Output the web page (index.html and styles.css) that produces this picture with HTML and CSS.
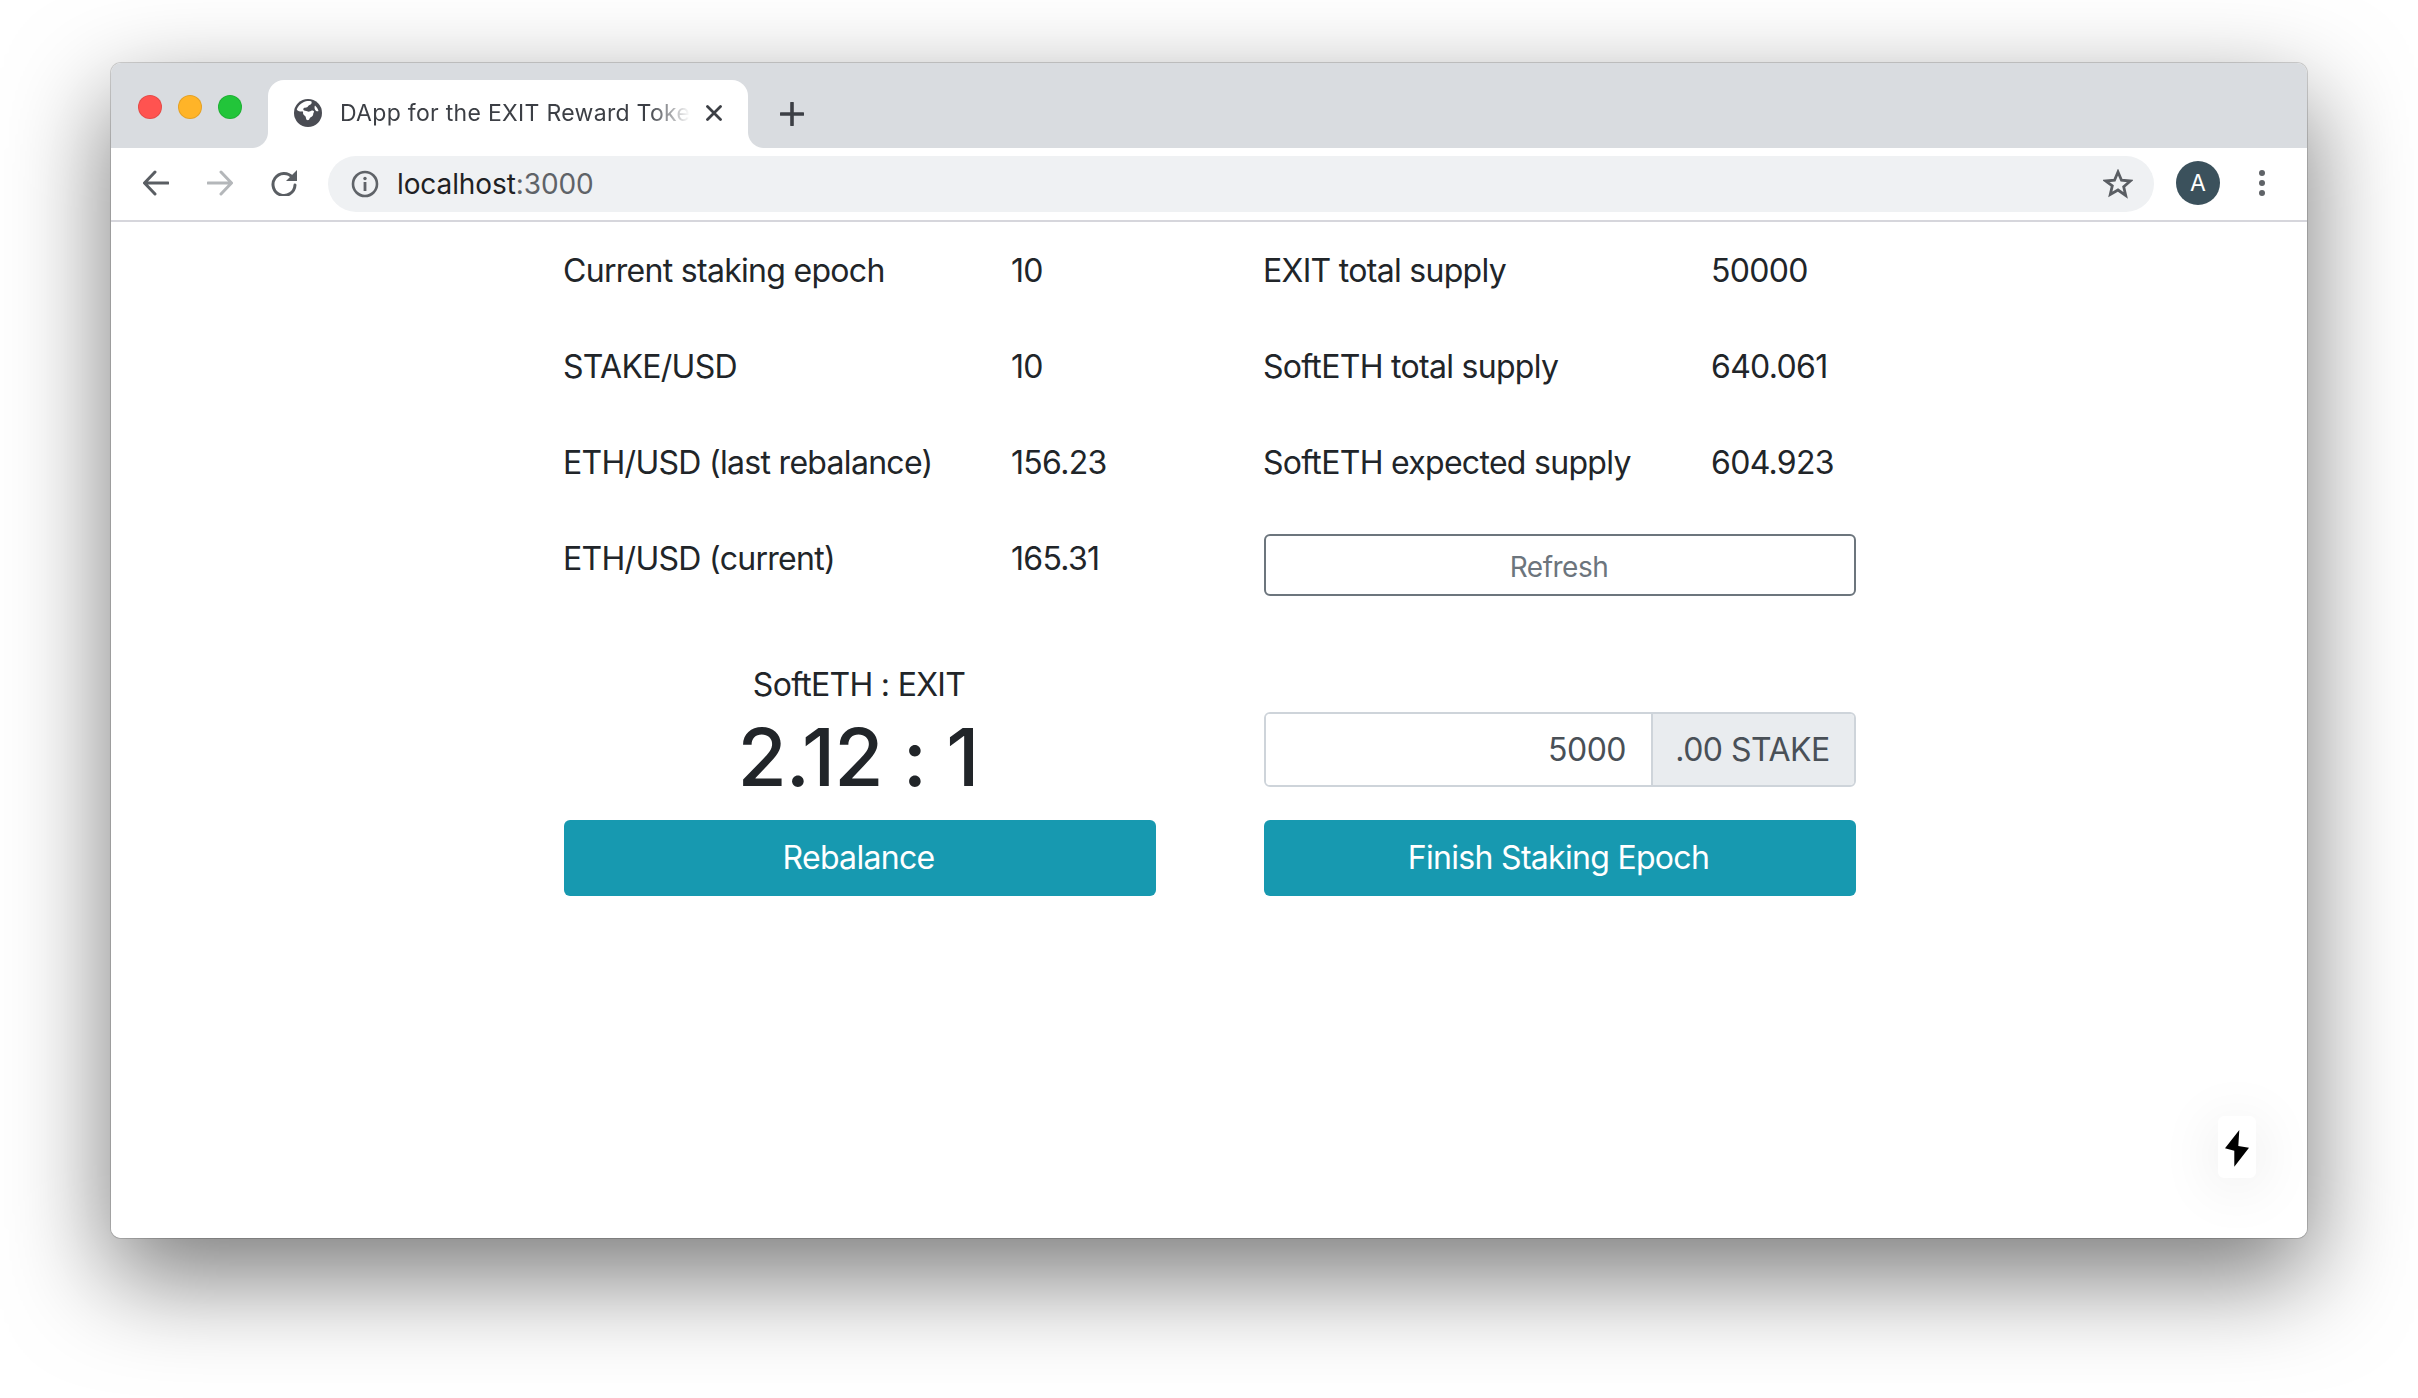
FILE: index.html
```html
<!DOCTYPE html>
<html lang="en">
<head>
<meta charset="utf-8">
<title>DApp for the EXIT Reward Token</title>
<link rel="stylesheet" href="styles.css">
</head>
<body>
<div class="window">
  <header class="tabbar">
    <div class="lights">
      <span class="light red"></span>
      <span class="light yellow"></span>
      <span class="light green"></span>
    </div>
    <div class="tab">
      <svg class="favicon" viewBox="0 0 28 28" width="28" height="28"><circle cx="14" cy="14" r="14" fill="#4a4c53"/><path d="M9 3.500c3-1.500 6-1.700 8.500-1 .6 1.600-.3 3-2 3.600-1.200.5-1.400 1.600-2.400 2.200-1.400.8-2.800 0-3.600 1.200-.7 1 .2 2.200 1.600 2.200 1.800 0 2.700 1.300 4.300.9 1.500-.4 2.300-1.400 3.800-.9.900.3 1.100 1 .5 1.900-.8 1.100-.1 2.300-1.200 3.300-1.100 1-2.500 1.300-2.900 2.600-.3 1.100-1.300 2-2.600 1.500-1.100-.5-.8-1.900-1.300-3.100-.5-1.200-2.100-1.500-2.500-2.800-.4-1.200.4-2-.8-2.900C5.200 13 3.400 12 2.800 10.300 3.900 7.300 6.200 5 9 3.500z" fill="#fff"/><path d="M21 6.500c1.600 1.400 3 3.400 3.500 5.500-1.200.5-2.600 0-3.300-1.100-.7-1.200-1-3-.2-4.400z" fill="#fff"/></svg>
      <span class="tab-title">DApp for the EXIT Reward Token</span>
      <svg class="tab-close" viewBox="0 0 16 16" width="16" height="16"><path d="M1.500 1.500l13 13M14.500 1.500l-13 13" stroke="#3c3f45" stroke-width="2.800" stroke-linecap="round"/></svg>
    </div>
    <svg class="new-tab" viewBox="0 0 24 24" width="24" height="24"><path d="M12 1v22M1 12h22" stroke="#3c3f45" stroke-width="3.600" stroke-linecap="round"/></svg>
  </header>
  <nav class="toolbar">
    <svg class="nav-icon" viewBox="0 0 26 26" width="26" height="26"><path d="M25 13H2M12 2L1.500 13 12 24" fill="none" stroke="#5a5e63" stroke-width="3" stroke-linecap="round" stroke-linejoin="round"/></svg>
    <svg class="nav-icon" viewBox="0 0 26 26" width="26" height="26"><path d="M1 13h23M14 2l10.500 11L14 24" fill="none" stroke="#b4b7ba" stroke-width="3" stroke-linecap="round" stroke-linejoin="round"/></svg>
    <svg class="nav-icon" viewBox="0 0 26 26" width="26" height="26"><path d="M21.500 7.500A11 11 0 1 0 24 15" fill="none" stroke="#5a5e63" stroke-width="3" stroke-linecap="round"/><path d="M26 0v11H15z" fill="#5a5e63"/></svg>
    <div class="omnibox">
      <svg class="info" viewBox="0 0 28 28" width="28" height="28"><circle cx="14" cy="14" r="12" fill="none" stroke="#5f6368" stroke-width="2.600"/><circle cx="14" cy="8.500" r="1.700" fill="#5f6368"/><rect x="12.600" y="12" width="2.800" height="9" fill="#5f6368"/></svg>
      <span class="url">localhost<span class="port">:3000</span></span>
      <svg class="star" viewBox="0 0 30 30" width="30" height="30"><path d="M15 3l3.500 8.200 8.900.8-6.700 5.800 2 8.700L15 21l-7.700 4.500 2-8.700L2.600 12l8.900-.8z" fill="none" stroke="#5a5e63" stroke-width="2.800" stroke-linejoin="miter"/></svg>
    </div>
    <div class="avatar">A</div>
    <div class="kebab"><span></span><span></span><span></span></div>
  </nav>
  <main class="page">
    <div class="content">
      <section class="stats">
        <div class="stat"><span class="stat-label">Current staking epoch</span><span>10</span></div>
        <div class="stat"><span class="stat-label">STAKE/USD</span><span>10</span></div>
        <div class="stat"><span class="stat-label">ETH/USD (last rebalance)</span><span>156.23</span></div>
        <div class="stat"><span class="stat-label">ETH/USD (current)</span><span>165.31</span></div>
      </section>
      <section class="stats">
        <div class="stat"><span class="stat-label">EXIT total supply</span><span>50000</span></div>
        <div class="stat"><span class="stat-label">SoftETH total supply</span><span>640.061</span></div>
        <div class="stat"><span class="stat-label">SoftETH expected supply</span><span>604.923</span></div>
        <div class="stat"><button class="btn-outline">Refresh</button></div>
      </section>
      <section class="action ratio">
        <div class="ratio-label">SoftETH : EXIT</div>
        <div class="ratio-value">2.12 : 1</div>
        <button class="btn-primary">Rebalance</button>
      </section>
      <section class="action">
        <div class="input-group">
          <input class="amount" type="text" value="5000">
          <span class="addon">.00 STAKE</span>
        </div>
        <button class="btn-primary">Finish Staking Epoch</button>
      </section>
    </div>
    <div class="bolt-widget">
      <svg viewBox="0 0 38 62" width="38" height="62"><path d="M21.300 14L7 32.300l9.300 2.400v16L31 31.700 20.300 30z" fill="#000"/></svg>
    </div>
  </main>
</div>
</body>
</html>
```

FILE: styles.css
```css
* { box-sizing: border-box; }

html, body { margin: 0; height: 100%; }

body {
  background: #fff;
  padding: 63px 111px 0 111px;
  font-family: "Inter", "Liberation Sans", sans-serif;
  color: #212529;
  overflow: hidden;
}

.window {
  width: 2196px;
  height: 1175px;
  border-radius: 10px;
  display: flex;
  flex-direction: column;
  background: #fff;
  box-shadow: 0 0 0 1px rgba(0, 0, 0, .16), 0 38px 100px 2px rgba(0, 0, 0, .52);
}

.tabbar {
  height: 85px;
  flex: none;
  background: #d9dce0;
  border-radius: 10px 10px 0 0;
  display: flex;
  align-items: flex-end;
  padding-left: 27px;
}

.lights {
  display: flex;
  gap: 16px;
  align-self: flex-start;
  margin-top: 32px;
  width: 130px;
}

.light {
  width: 24px;
  height: 24px;
  border-radius: 50%;
  border: 1px solid rgba(0, 0, 0, .1);
}
.red { background: #ff5350; }
.yellow { background: #ffb428; }
.green { background: #22c53a; }

.tab {
  position: relative;
  width: 480px;
  height: 68px;
  background: #fff;
  border-radius: 16px 16px 0 0;
  display: flex;
  align-items: center;
  padding: 0 0 2px 26px;
}

.tab::before,
.tab::after {
  content: "";
  position: absolute;
  bottom: 0;
  width: 16px;
  height: 16px;
}
.tab::before {
  left: -16px;
  background: radial-gradient(circle at 0 0, #d9dce0 15.500px, #fff 16.500px);
}
.tab::after {
  right: -16px;
  background: radial-gradient(circle at 100% 0, #d9dce0 15.500px, #fff 16.500px);
}

.favicon { flex: none; }

.tab-title {
  width: 350px;
  margin-left: 18px;
  font-size: 23px;
  white-space: nowrap;
  overflow: hidden;
  color: #3c3f45;
  letter-spacing: .3px;
  -webkit-mask-image: linear-gradient(to right, #000 88%, transparent 100%);
  mask-image: linear-gradient(to right, #000 88%, transparent 100%);
}

.tab-close { flex: none; margin-left: 16px; }

.new-tab { flex: none; margin: 0 0 22px 32px; }

.toolbar {
  height: 74px;
  flex: none;
  display: flex;
  align-items: center;
  padding: 0 42px 2px 32px;
  border-bottom: 2px solid #d6d6dc;
}

.nav-icon { flex: none; margin-right: 38px; }
.nav-icon:nth-of-type(3) { margin-right: 31px; margin-left: 0; }

.omnibox {
  flex: 1;
  height: 56px;
  border-radius: 28px;
  background: #eff1f3;
  display: flex;
  align-items: center;
  padding: 0 21px 0 23px;
  margin-top: 2px;
}

.info { flex: none; }

.url {
  margin-left: 18px;
  font-size: 28px;
  color: #1f2124;
  letter-spacing: -.1px;
  flex: 1;
}
.port { color: #5f6368; }

.star { flex: none; }

.avatar {
  flex: none;
  width: 44px;
  height: 44px;
  margin-left: 22px;
  border-radius: 50%;
  background: #3b515c;
  color: #fff;
  font-size: 23px;
  display: flex;
  align-items: center;
  justify-content: center;
}

.kebab {
  flex: none;
  margin-left: 39px;
  display: flex;
  flex-direction: column;
  gap: 4px;
}
.kebab span {
  width: 6px;
  height: 6px;
  border-radius: 50%;
  background: #5f6368;
}

.page {
  position: relative;
  flex: 1;
  border-radius: 0 0 10px 10px;
  background: #fff;
}

.content {
  width: 1292px;
  margin-left: 453px;
  display: grid;
  grid-template-columns: 592px 592px;
  column-gap: 108px;
}

.stats { display: flex; flex-direction: column; }

.stat {
  height: 96.200px;
  display: flex;
  align-items: center;
  font-size: 32px;
  letter-spacing: -.7px;
  white-space: nowrap;
}

.stat-label { width: 448px; flex: none; margin-left: -1px; }

.btn-outline {
  width: 100%;
  height: 62px;
  margin-top: 12px;
  padding: 4px 2px 0 0;
  border: 2px solid #6c757d;
  border-radius: 6px;
  background: #fff;
  color: #6c757d;
  font: inherit;
  font-size: 28px;
  letter-spacing: -.5px;
}

.action {
  display: flex;
  flex-direction: column;
  justify-content: flex-end;
  height: 289px;
}

.ratio { align-items: stretch; text-align: center; }

.ratio-label {
  font-size: 32px;
  letter-spacing: -.7px;
  line-height: 40px;
  padding-right: 2px;
}

.ratio-value {
  font-size: 80px;
  font-weight: 500;
  letter-spacing: -1px;
  line-height: 94px;
  margin: 5px 0 16px;
  padding-right: 4px;
}

.input-group {
  display: flex;
  height: 75px;
  margin-bottom: 33px;
  border: 2px solid #ced4da;
  border-radius: 6px;
  overflow: hidden;
}

.amount {
  flex: 1;
  min-width: 0;
  border: 0;
  padding: 0 25px;
  text-align: right;
  font: inherit;
  font-size: 32px;
  letter-spacing: -.5px;
  color: #495057;
}

.addon {
  flex: none;
  width: 203px;
  padding-right: 2px;
  background: #e9ecef;
  border-left: 2px solid #ced4da;
  display: flex;
  align-items: center;
  justify-content: center;
  font-size: 32px;
  letter-spacing: -.5px;
  color: #495057;
}

.btn-primary {
  width: 100%;
  height: 76px;
  flex: none;
  padding: 0 3px 0 0;
  border: 0;
  border-radius: 6px;
  background: #1799b0;
  color: #fff;
  font: inherit;
  font-size: 32px;
  letter-spacing: -.7px;
}

.bolt-widget {
  position: absolute;
  left: 2107px;
  top: 894px;
  width: 38px;
  height: 62px;
  background: #fff;
  border-radius: 6px;
  box-shadow: 0 8px 60px rgba(0, 0, 0, .1);
}
.bolt-widget svg { display: block; }
```
